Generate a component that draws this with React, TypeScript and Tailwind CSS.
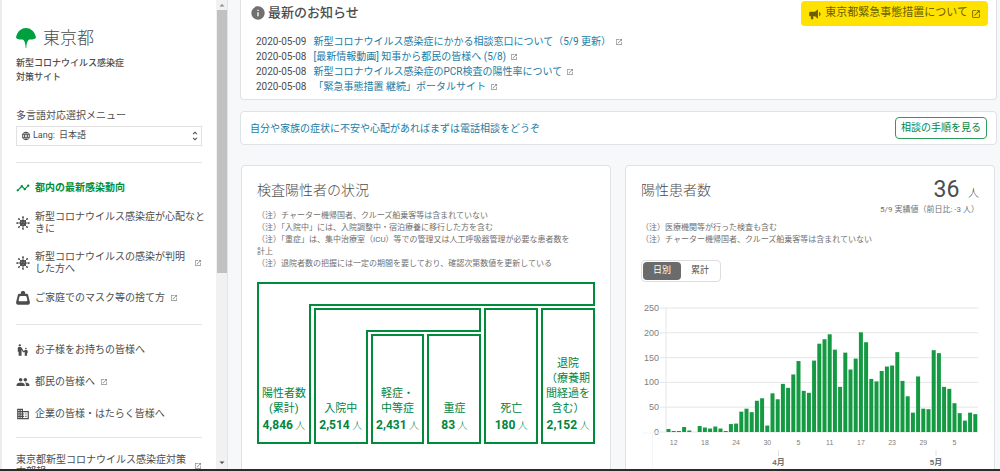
import * as React from "react";
import {
  MdBusiness,
  MdEscalatorWarning,
  MdInfo,
  MdLanguage,
  MdOpenInNew,
  MdPeople,
  MdTimeline,
  MdUnfoldMore,
} from "react-icons/md";

type MenuItem = {
  label: string;
  icon: React.ReactNode;
  active?: boolean;
  external?: boolean;
};

type NewsItem = {
  date: string;
  text: string;
};

function VirusIcon() {
  return (
    <svg viewBox="0 0 24 24" className="h-3.5 w-3.5" aria-hidden>
      <circle cx="12" cy="12" r="5.6" fill="currentColor" />
      <path
        d="M12 2v20M2 12h20M5 5l14 14M19 5L5 19"
        stroke="currentColor"
        strokeWidth="1.5"
        strokeLinecap="round"
      />
      <g fill="currentColor">
        <circle cx="12" cy="2" r="1.5" />
        <circle cx="12" cy="22" r="1.5" />
        <circle cx="2" cy="12" r="1.5" />
        <circle cx="22" cy="12" r="1.5" />
        <circle cx="5" cy="5" r="1.5" />
        <circle cx="19" cy="5" r="1.5" />
        <circle cx="5" cy="19" r="1.5" />
        <circle cx="19" cy="19" r="1.5" />
      </g>
      <g fill="white" opacity="0.5">
        <circle cx="10" cy="10.5" r="0.9" />
        <circle cx="14" cy="10.5" r="0.9" />
        <circle cx="12" cy="14" r="0.9" />
      </g>
    </svg>
  );
}

function TrashBagIcon() {
  return (
    <svg viewBox="0 0 24 24" className="h-3.5 w-3.5" aria-hidden>
      <path
        fill="currentColor"
        fillRule="evenodd"
        d="M12 0c2.200 0 3.800 1.200 3.800 2.900 0 .7-.2 1.200-.5 1.700h3.200c1.200 0 1.900.6 2.200 1.700L23.800 19c.3 2.600-.8 4.500-3 4.500H3.200C1 23.500-.1 21.600.2 19L3.300 6.300c.3-1.100 1-1.700 2.200-1.700h3.200c-.3-.5-.5-1-.5-1.700C8.200 1.200 9.800 0 12 0zM8 8.500c-1.100 0-1.800.5-2.100 1.500l-1.200 5.200c-.3 1.400.4 2.300 1.800 2.300h11c1.400 0 2.100-.9 1.800-2.300L18.100 10c-.3-1-1-1.500-2.100-1.500z"
      />
    </svg>
  );
}

function BullhornIcon() {
  return (
    <svg viewBox="0 0 24 24" className="h-3.5 w-3.5 shrink-0" fill="currentColor" aria-hidden>
      <path d="M12,8H4A2,2 0 0,0 2,10V14A2,2 0 0,0 4,16H5V20A1,1 0 0,0 6,21H8A1,1 0 0,0 9,20V16H12L17,20V4L12,8M21.5,12C21.5,13.71 20.54,15.26 19,16V8C20.53,8.75 21.5,10.3 21.5,12Z" />
    </svg>
  );
}

function GinkgoLogo() {
  return (
    <svg viewBox="0 0 20 20" className="h-5 w-5" aria-hidden>
      <path
        fill="#00a040"
        d="M10 0C5.500 0 1 3.300 0 9.800c1.200 1.200 2.600 1.800 4.200 1.700 1-.1 1.800-.1 2.500-.1C8.600 12.500 9.500 15 9.700 20h.6c.2-5 1.100-7.500 3-8.600.7 0 1.500 0 2.500.1 1.600.1 3-.5 4.200-1.700C19 3.300 14.500 0 10 0z"
      />
    </svg>
  );
}

const MAIN_MENU: MenuItem[] = [
  { label: "都内の最新感染動向", icon: <MdTimeline className="h-3.5 w-3.5" />, active: true },
  { label: "新型コロナウイルス感染症が心配なときに", icon: <VirusIcon /> },
  { label: "新型コロナウイルスの感染が判明した方へ", icon: <VirusIcon />, external: true },
  { label: "ご家庭でのマスク等の捨て方", icon: <TrashBagIcon />, external: true },
];

const AUDIENCE_MENU: MenuItem[] = [
  { label: "お子様をお持ちの皆様へ", icon: <MdEscalatorWarning className="h-3.5 w-3.5" /> },
  { label: "都民の皆様へ", icon: <MdPeople className="h-3.5 w-3.5" />, external: true },
  { label: "企業の皆様・はたらく皆様へ", icon: <MdBusiness className="h-3.5 w-3.5" /> },
];

const NEWS: NewsItem[] = [
  { date: "2020-05-09", text: "新型コロナウイルス感染症にかかる相談窓口について（5/9 更新）" },
  { date: "2020-05-08", text: "[最新情報動画] 知事から都民の皆様へ (5/8)" },
  { date: "2020-05-08", text: "新型コロナウイルス感染症のPCR検査の陽性率について" },
  { date: "2020-05-08", text: "「緊急事態措置 継続」ポータルサイト" },
];

// Daily positives, 3/11 to 5/9
const DAILY = [
  6, 2, 2, 10, 3, 0, 12, 9, 7, 11, 7, 2, 16, 17, 41, 47, 40, 63, 68, 13,
  78, 66, 97, 89, 116, 143, 83, 79, 144, 178, 187, 197, 166, 91, 160, 126, 148, 201, 181, 107,
  102, 123, 132, 134, 161, 103, 72, 39, 112, 47, 46, 165, 159, 91, 87, 58, 38, 23, 39, 36,
];

const DAY_TICKS = ["12", "18", "24", "30", "5", "11", "17", "23", "29", "5"];

function ExternalIcon() {
  return <MdOpenInNew className="h-2 w-2 shrink-0 text-[#8a8a8a]" aria-hidden />;
}

function MenuLink({ item }: { item: MenuItem }) {
  // A label that wraps pushes its external mark to the far edge
  const wraps = item.label.length > 16;
  return (
    <a
      href="#"
      className={[
        "-mr-1 flex items-center gap-[5px] leading-3",
        item.active ? "font-bold text-[#00903c]" : "text-[#4d4d4d]",
      ].join(" ")}
    >
      <span className="shrink-0">{item.icon}</span>
      <span className={wraps ? "flex-1" : ""}>{item.label}</span>
      {item.external && (
        <span className={wraps ? "mr-1" : ""}>
          <ExternalIcon />
        </span>
      )}
    </a>
  );
}

function ScrollRail() {
  return (
    <div className="flex w-3 shrink-0 flex-col items-center border-r border-[#e4e4e4] bg-[#f1f1f1]" aria-hidden>
      <svg viewBox="0 0 10 10" className="h-2.5 w-2.5 shrink-0">
        <path d="M2.500 6.500L5 4l2.500 2.500z" fill="#8c8c8c" />
      </svg>
      <div className="h-[56%] w-2.5 bg-[#c1c1c1]" />
      <svg viewBox="0 0 10 10" className="mt-auto h-3 w-2.5 shrink-0">
        <path d="M2.500 3.500L5 6l2.500-2.500z" fill="#505050" />
      </svg>
    </div>
  );
}

function Sidebar() {
  return (
    <aside className="flex w-[228px] shrink-0 border-l-2 border-[#ececec] bg-white">
      <div className="min-w-0 flex-1 overflow-hidden pt-7 pr-3.5 pl-3.5">
        <h1>
          <a href="#" className="block text-[#4d4d4d]">
            <span className="flex items-center gap-[7px]">
              <GinkgoLogo />
              <span className="text-[17px] leading-5 font-light text-[#4d4d4d]">東京都</span>
            </span>
            <span className="mt-2 block text-[9px] leading-[14px] font-medium">
              新型コロナウイルス感染症
              <br />
              対策サイト
            </span>
          </a>
        </h1>

        <label htmlFor="lang" className="mt-6 block leading-4">
          多言語対応選択メニュー
        </label>
        <div className="relative mt-0.5 flex h-5 items-center border border-[#e0e0e0] pl-1 text-[9px]">
          <MdLanguage className="h-2.5 w-2.5" aria-hidden />
          <span className="ml-0.5">Lang:</span>
          <select id="lang" className="h-full flex-1 appearance-none bg-transparent pl-1 text-[9px] outline-none">
            <option>日本語</option>
          </select>
          <MdUnfoldMore className="pointer-events-none absolute right-0 h-3 w-3" aria-hidden />
        </div>

        <nav>
          <ul className="mt-4 flex flex-col gap-4 border-t border-[#e4e4e4] pt-[18px] pb-[19px]">
            {MAIN_MENU.map((item) => (
              <li key={item.label}>
                <MenuLink item={item} />
              </li>
            ))}
          </ul>
          <ul className="flex flex-col gap-[18px] border-t border-[#e4e4e4] pt-[18px] pb-4">
            {AUDIENCE_MENU.map((item) => (
              <li key={item.label}>
                <MenuLink item={item} />
              </li>
            ))}
          </ul>
          <div className="border-t border-[#e4e4e4] pt-4">
            <a href="#" className="flex items-center gap-1 leading-3">
              <span className="flex-1">東京都新型コロナウイルス感染症対策本部報</span>
              <ExternalIcon />
            </a>
          </div>
        </nav>
      </div>
      <ScrollRail />
    </aside>
  );
}

function NewsCard() {
  return (
    <section className="rounded-b-sm border border-t-0 border-[#dfe2e5] bg-white px-[9px] pt-px pb-[5px]">
      <div className="flex items-start justify-between">
        <h2 className="flex items-center gap-0.5 pt-0.5 text-[13px] leading-5 font-medium text-[#4d4d4d]">
          <MdInfo className="h-4 w-4 text-[#707070]" aria-hidden />
          最新のお知らせ
        </h2>
        <a
          href="#"
          className="-mr-px flex h-[25px] items-center gap-[3px] rounded-sm bg-[#ffe200] px-[7px] text-[11px] text-[#6b5f00]"
        >
          <BullhornIcon />
          東京都緊急事態措置について
          <MdOpenInNew className="h-2.5 w-2.5" aria-hidden />
        </a>
      </div>
      <ul className="mt-2 pl-1.5">
        {NEWS.map((item) => (
          <li key={item.text} className="leading-[15px]">
            <a href="#" className="flex items-center">
              <time dateTime={item.date} className="mr-[7px]">
                {item.date}
              </time>
              <span className="mr-1 text-[#1a7ca6]">{item.text}</span>
              <ExternalIcon />
            </a>
          </li>
        ))}
      </ul>
    </section>
  );
}

function ConsultCard() {
  return (
    <section className="mt-[11px] flex items-center justify-between rounded-sm border border-[#dfe2e5] bg-white px-[9px] py-[5px]">
      <a href="#" className="text-[#1a7ca6]">
        自分や家族の症状に不安や心配があればまずは電話相談をどうぞ
      </a>
      <a href="#" className="rounded-sm border border-[#2e9a5c] px-[5px] py-0.5 leading-4 text-[#00853f]">
        相談の手順を見る
      </a>
    </section>
  );
}

function Figure({ label, value }: { label: React.ReactNode; value: string }) {
  return (
    <div className="text-center text-[11px] leading-[15px]">
      <p>{label}</p>
      <p className="text-[10px] leading-[18px] font-light whitespace-nowrap">
        <strong className="text-[12px] font-bold">{value}</strong> 人
      </p>
    </div>
  );
}

// Upright of an L shape; its arm is an ArmTop in the next columns
function Upright({ className, children }: { className: string; children: React.ReactNode }) {
  return (
    <div className={`flex flex-col ${className}`}>
      <div className="h-[22px] border-t-2 border-l-2 border-[#008c3a]" />
      <div className="flex flex-1 flex-col justify-end border-2 border-t-0 border-[#008c3a] pb-[7px]">{children}</div>
    </div>
  );
}

function ArmTop({ className }: { className: string }) {
  return <div className={`-ml-[5px] border-2 border-l-0 border-[#008c3a] ${className}`} />;
}

function Box({ className, children }: { className: string; children: React.ReactNode }) {
  return (
    <div className={`flex flex-col justify-end border-2 border-[#008c3a] pb-[7px] ${className}`}>{children}</div>
  );
}

function StatusCard() {
  return (
    <section className="min-w-0 flex-1 rounded-sm border border-[#dfe2e5] bg-white px-[15px] pt-3.5 pb-8">
      <h3 className="text-[14px] leading-5 font-light text-[#4d4d4d]">検査陽性者の状況</h3>
      <ul className="mt-2.5 text-[8px] leading-3 text-[#707070]">
        <li>（注）チャーター機帰国者、クルーズ船乗客等は含まれていない</li>
        <li>（注）「入院中」には、入院調整中・宿泊療養に移行した方を含む</li>
        <li>
          （注）「重症」は、集中治療室（ICU）等での管理又は人工呼吸器管理が必要な患者数を
          <br />
          計上
        </li>
        <li>（注）退院者数の把握には一定の期間を要しており、確認次第数値を更新している</li>
      </ul>
      <div className="mt-3 grid grid-cols-6 grid-rows-[24px_24px_minmax(110px,auto)] gap-x-[3px] gap-y-0.5 text-[#00853f]">
        <Upright className="col-start-1 row-span-3 row-start-1">
          <Figure label={<>陽性者数<br />(累計)</>} value="4,846" />
        </Upright>
        <ArmTop className="col-span-5 col-start-2 row-start-1" />
        <Upright className="col-start-2 row-span-2 row-start-2">
          <Figure label="入院中" value="2,514" />
        </Upright>
        <ArmTop className="col-span-2 col-start-3 row-start-2" />
        <Box className="col-start-3 row-start-3">
          <Figure label={<>軽症・<br />中等症</>} value="2,431" />
        </Box>
        <Box className="col-start-4 row-start-3">
          <Figure label="重症" value="83" />
        </Box>
        <Box className="col-start-5 row-span-2 row-start-2">
          <Figure label="死亡" value="180" />
        </Box>
        <Box className="col-start-6 row-span-2 row-start-2">
          <Figure label={<>退院<br />（療養期<br />間経過を<br />含む）</>} value="2,152" />
        </Box>
      </div>
    </section>
  );
}

const BASE_Y = 132;
const UNIT = 124 / 250;
const FIRST_X = 27.5;
const STEP = 5.2;

function DailyChart() {
  return (
    <svg viewBox="0 0 338 175" className="mt-[18px] w-full" fontFamily="Liberation Sans, Arial, sans-serif" role="img">
      {[0, 50, 100, 150, 200, 250].map((v) => {
        const y = BASE_Y - v * UNIT;
        return (
          <g key={v}>
            <line x1="19" x2="337" y1={y} y2={y} stroke="#e6e6e6" strokeWidth="1" />
            <text x="18" y={y + 3} textAnchor="end" fontSize="9" fill="#808080">
              {v}
            </text>
          </g>
        );
      })}
      <line x1="25" x2="25" y1="8" y2={BASE_Y} stroke="#e6e6e6" />
      <line x1="2" x2="19" y1={BASE_Y + 1} y2={BASE_Y + 1} stroke="#f3f3f3" />
      <line x1="11.500" x2="11.500" y1={BASE_Y + 2} y2="168" stroke="#f5f5f5" />
      {DAILY.map((v, i) => (
        <rect
          key={i}
          x={FIRST_X + i * STEP - 2}
          y={BASE_Y - v * UNIT}
          width="4"
          height={v * UNIT}
          fill="#149a42"
        />
      ))}
      {DAY_TICKS.map((day, i) => (
        <text
          key={i}
          x={FIRST_X + STEP + i * STEP * 6}
          y="145"
          textAnchor="middle"
          fontSize="7"
          fill="#808080"
        >
          {day}
        </text>
      ))}
      {[
        { x: 137.5, label: "4月" },
        { x: 295, label: "5月" },
      ].map((m) => (
        <g key={m.label}>
          <line x1={m.x} x2={m.x} y1="150" y2="156" stroke="#e0e0e0" />
          <text
            x={m.x}
            y="165"
            textAnchor="middle"
            fontSize="8"
            fontWeight="bold"
            fontFamily="Liberation Sans, Noto Sans CJK JP, sans-serif"
            fill="#707070"
          >
            {m.label}
          </text>
        </g>
      ))}
    </svg>
  );
}

function PatientsCard() {
  const [mode, setMode] = React.useState<"daily" | "total">("daily");

  return (
    <section className="min-w-0 flex-1 rounded-sm border border-[#dfe2e5] bg-white px-[15px] pt-3">
      <div className="flex items-start justify-between">
        <h3 className="pt-0.5 text-[14px] leading-5 font-light text-[#4d4d4d]">陽性患者数</h3>
        <div className="text-right">
          <p className="text-[11px] leading-6 font-light text-[#4d4d4d]">
            <span className="mr-1.5 text-[23px] font-normal">36</span> 人
          </p>
          <p className="-mt-0.5 text-[8px] leading-3 text-[#707070]">5/9 実績値（前日比: -3 人）</p>
        </div>
      </div>
      <ul className="mt-1.5 text-[8px] leading-3 text-[#707070]">
        <li>（注）医療機関等が行った検査も含む</li>
        <li>（注）チャーター機帰国者、クルーズ船乗客等は含まれていない</li>
      </ul>
      <div className="mt-3.5 flex w-fit rounded-sm border border-[#dedede] p-px text-[9px]">
        {(["daily", "total"] as const).map((key) => (
          <button
            key={key}
            type="button"
            aria-pressed={mode === key}
            onClick={() => setMode(key)}
            className={[
              "h-[18px] w-[38px] cursor-pointer rounded-sm",
              mode === key ? "bg-[#6b6b6b] text-white" : "text-[#4d4d4d]",
            ].join(" ")}
          >
            {key === "daily" ? "日別" : "累計"}
          </button>
        ))}
      </div>
      <DailyChart />
    </section>
  );
}

export default function App() {
  return (
    <div className="flex h-screen flex-col overflow-hidden bg-[#f7f8fa] font-['Roboto','Noto_Sans_CJK_JP',sans-serif] text-[10px] text-[#4d4d4d]">
      <div className="flex min-h-0 flex-1">
        <Sidebar />
        <main className="min-w-0 flex-1 overflow-hidden pr-[3px] pl-3">
          <NewsCard />
          <ConsultCard />
          <div className="mt-5 flex items-start gap-[14px] pr-0.5 pl-px">
            <StatusCard />
            <PatientsCard />
          </div>
        </main>
      </div>
      <div className="h-0.5 shrink-0 bg-[#2b2b2b]" />
    </div>
  );
}
